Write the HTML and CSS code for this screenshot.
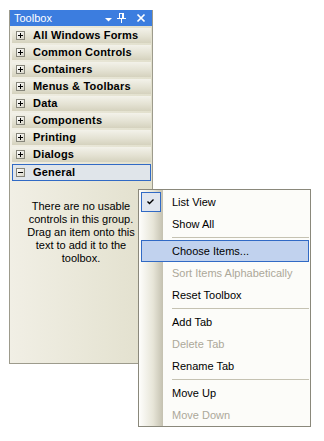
FILE: index.html
```html
<!DOCTYPE html>
<html>
<head>
<meta charset="utf-8">
<link rel="stylesheet" href="styles.css">
</head>
<body>
<div class="panel">
  <div class="titlebar">
    <span class="title">Toolbox</span>
    <svg class="tb-icons" width="44" height="16" viewBox="0 0 44 16">
      <polygon points="3,8 10,8 6.5,11.5" fill="#fff"/>
      <g fill="#fff" shape-rendering="crispEdges">
        <rect x="17" y="3" width="1" height="5"/>
        <rect x="17" y="3" width="4" height="1"/>
        <rect x="20" y="3" width="2" height="5"/>
        <rect x="15" y="8" width="9" height="1"/>
        <rect x="19" y="9" width="1" height="4"/>
      </g>
      <path d="M35.5 4.5 L42.5 11.5 M42.5 4.5 L35.5 11.5" stroke="#fff" stroke-width="1.7" fill="none"/>
    </svg>
  </div>
  <div class="groups">
    <div class="group"><span class="tg plus"></span><span class="gname">All Windows Forms</span></div>
    <div class="group"><span class="tg plus"></span><span class="gname">Common Controls</span></div>
    <div class="group"><span class="tg plus"></span><span class="gname">Containers</span></div>
    <div class="group"><span class="tg plus"></span><span class="gname">Menus &amp; Toolbars</span></div>
    <div class="group"><span class="tg plus"></span><span class="gname">Data</span></div>
    <div class="group"><span class="tg plus"></span><span class="gname">Components</span></div>
    <div class="group"><span class="tg plus"></span><span class="gname">Printing</span></div>
    <div class="group"><span class="tg plus"></span><span class="gname">Dialogs</span></div>
    <div class="group selected"><span class="tg"></span><span class="gname">General</span></div>
  </div>
  <p class="empty">There are no usable<br>controls in this group.<br>Drag an item onto this<br>text to add it to the<br>toolbox.</p>
</div>

<div class="menu">
  <div class="item checked">
    <span class="check"><svg width="7" height="6" viewBox="0 0 7 6"><path d="M0.5 2.5 L2.5 4.5 L6.5 0.5" stroke="#000" stroke-width="1.4" fill="none"/></svg></span>
    <span class="label">List View</span>
  </div>
  <div class="item"><span class="label">Show All</span></div>
  <div class="sep"></div>
  <div class="item hot"><span class="label">Choose Items...</span></div>
  <div class="item disabled"><span class="label">Sort Items Alphabetically</span></div>
  <div class="item"><span class="label">Reset Toolbox</span></div>
  <div class="sep"></div>
  <div class="item"><span class="label">Add Tab</span></div>
  <div class="item disabled"><span class="label">Delete Tab</span></div>
  <div class="item"><span class="label">Rename Tab</span></div>
  <div class="sep"></div>
  <div class="item"><span class="label">Move Up</span></div>
  <div class="item disabled"><span class="label">Move Down</span></div>
</div>
</body>
</html>
```
FILE: styles.css
```css
* { box-sizing: border-box; }
html, body {
  margin: 0;
  padding: 0;
  background: #fff;
  font-family: "Liberation Sans", Arial, sans-serif;
  font-size: 11px;
  color: #000;
}

.panel {
  margin: 10px 0 0 9px;
  width: 144px;
  height: 354px;
  border: 1px solid #9d9b8c;
  border-top: 0;
  background: linear-gradient(to right, #f1efe5, #e2e0cd);
}

.titlebar {
  height: 16px;
  background: #3c7ddf;
  color: #fff;
  display: flex;
  align-items: center;
  justify-content: space-between;
  padding: 0 6px 0 4px;
}
.title { line-height: 16px; }
.tb-icons { display: block; }

.groups {
  padding: 2px 1px 0 2px;
}
.group {
  height: 15px;
  margin-bottom: 2px;
  display: flex;
  align-items: center;
  padding-left: 4px;
  background: linear-gradient(to bottom, #f3f2ea, #e4e2d3 55%, #d5d2be);
  font-weight: bold;
}
.group.selected {
  height: 17px;
  padding-left: 3px;
  border: 1px solid #316ac5;
  background: #e0e5ea;
}
.gname { line-height: 15px; letter-spacing: 0.2px; }

.tg {
  width: 9px;
  height: 9px;
  margin-right: 8px;
  border: 1px solid #86857a;
  background: linear-gradient(135deg, #ffffff, #d9d6c8);
  display: grid;
  place-items: center;
  flex: none;
}
.tg::before {
  content: "";
  grid-area: 1 / 1;
  width: 5px;
  height: 1px;
  background: #000;
}
.tg.plus::after {
  content: "";
  grid-area: 1 / 1;
  width: 1px;
  height: 5px;
  background: #000;
}

.empty {
  margin: 0;
  padding-top: 17px;
  text-align: center;
  line-height: 13px;
}

.menu {
  position: absolute;
  left: 138px;
  top: 189px;
  width: 173px;
  height: 238px;
  border: 1px solid #8a887b;
  padding: 1px 0 0 0;
  background: linear-gradient(to right, #fefefc 0, #e7e5d8 14px, #c4c1b0 24px, #fcfcf9 24px, #fcfcf9 100%);
}
.item {
  height: 22px;
  margin: 0 1px 0 2px;
  display: flex;
  align-items: center;
  padding-left: 31px;
}
.item .label { line-height: 22px; }
.item.checked { padding-left: 0; }
.check {
  width: 20px;
  height: 20px;
  margin-right: 11px;
  border: 1px solid #316ac5;
  background: #e1e6ee;
  display: flex;
  align-items: center;
  justify-content: center;
  padding-right: 2px;
}
.check svg { display: block; }
.item.hot {
  border: 1px solid #316ac5;
  background: #c1d2ee;
  padding-left: 30px;
}
.item.disabled { color: #aca899; }
.sep {
  height: 1px;
  margin: 2px 1px 2px 33px;
  background: #c5c2b2;
}
```
